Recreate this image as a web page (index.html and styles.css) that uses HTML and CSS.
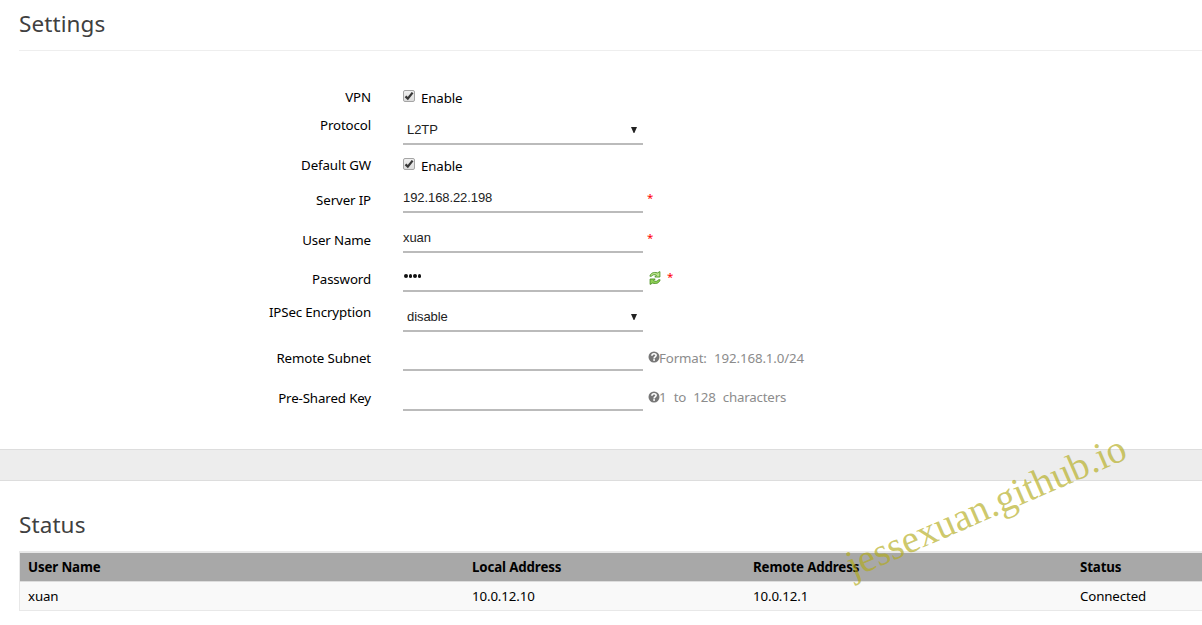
FILE: index.html
```html
<!DOCTYPE html>
<html lang="en">
<head>
<meta charset="utf-8">
<title>VPN Settings</title>
<link rel="stylesheet" href="styles.css">
</head>
<body>
<svg class="defs" width="0" height="0" aria-hidden="true">
  <symbol id="check" viewBox="0 0 10 10">
    <path d="M1.5 5.4 3.8 7.6 8.6 1.6" fill="none" stroke="#383838" stroke-width="2.3"/>
  </symbol>
  <symbol id="help" viewBox="0 0 12 12">
    <circle cx="6" cy="6" r="5.5" fill="#777"/>
    <path d="M3.9 4.7C4 2.1 8.2 2.2 8.1 4.5 8 5.9 6.1 5.8 6.1 7.4" fill="none" stroke="#fff" stroke-width="1.6"/>
    <rect x="5.2" y="8.2" width="1.8" height="1.6" fill="#fff"/>
  </symbol>
</svg>
<section class="settings">
  <h2 class="title">Settings</h2>
  <form class="form">
    <div class="row row-check">
      <label class="label">VPN</label>
      <span class="checkbox"><svg width="10" height="10"><use href="#check"/></svg></span>
      <span class="check-text">Enable</span>
    </div>
    <div class="row row-select">
      <label class="label">Protocol</label>
      <div class="control"><span class="value">L2TP</span><svg class="arrow" width="6" height="6" viewBox="0 0 6 6"><path d="M0 0h6L3.4 6h-.8z"/></svg></div>
    </div>
    <div class="row row-check">
      <label class="label">Default GW</label>
      <span class="checkbox"><svg width="10" height="10"><use href="#check"/></svg></span>
      <span class="check-text">Enable</span>
    </div>
    <div class="row">
      <label class="label">Server IP</label>
      <div class="control"><span class="value">192.168.22.198</span></div>
      <span class="required">*</span>
    </div>
    <div class="row row-tall">
      <label class="label">User Name</label>
      <div class="control"><span class="value">xuan</span></div>
      <span class="required">*</span>
    </div>
    <div class="row row-mid">
      <label class="label">Password</label>
      <div class="control"><span class="dots"><i></i><i></i><i></i><i></i></span></div>
      <svg class="refresh" width="12" height="14" viewBox="0 0 12 14">
        <path d="M.9 5.2C1.6 2.4 4.2.6 8.4 1.9L10.9.6V6H5.8L7.4 4.3C5.4 3.2 3.6 3.6 2.6 5.2z" fill="#b9e68c" stroke="#4b8f22" stroke-width=".9"/>
        <path d="M11.1 8.8C10.4 11.6 7.8 13.4 3.6 12.1L1.1 13.4V8h5.1L4.6 9.7C6.6 10.8 8.4 10.4 9.4 8.8z" fill="#8fd255" stroke="#4b8f22" stroke-width=".9"/>
      </svg>
      <span class="required">*</span>
    </div>
    <div class="row row-tall row-select">
      <label class="label">IPSec Encryption</label>
      <div class="control"><span class="value">disable</span><svg class="arrow" width="6" height="6" viewBox="0 0 6 6"><path d="M0 0h6L3.4 6h-.8z"/></svg></div>
    </div>
    <div class="row row-mid">
      <label class="label">Remote Subnet</label>
      <div class="control"></div>
      <svg class="help-icon" width="12" height="12"><use href="#help"/></svg>
      <span class="help">Format: 192.168.1.0/24</span>
    </div>
    <div class="row row-tall row-key">
      <label class="label">Pre-Shared Key</label>
      <div class="control"></div>
      <svg class="help-icon" width="12" height="12"><use href="#help"/></svg>
      <span class="help">1 to 128 characters</span>
    </div>
  </form>
</section>
<div class="divider"></div>
<section class="status">
  <h2 class="title title-status">Status</h2>
  <div class="table">
    <div class="tr th"><span>User Name</span><span>Local Address</span><span>Remote Address</span><span>Status</span></div>
    <div class="tr td"><span>xuan</span><span>10.0.12.10</span><span>10.0.12.1</span><span>Connected</span></div>
  </div>
</section>
<div class="watermark">jessexuan.github.io</div>
</body>
</html>
```
FILE: styles.css
```css
* { box-sizing: border-box; }
body {
  margin: 0;
  width: 1202px;
  height: 625px;
  overflow: hidden;
  position: relative;
  background: #fff;
  color: #000;
  font: 13.3px/20px "Noto Sans", sans-serif;
  letter-spacing: -.13px;
}
.defs { display: none; }
svg { display: block; flex: none; }
.settings { height: 449px; padding-left: 19px; }
.title {
  margin: 0;
  height: 51px;
  padding-top: 8px;
  border-bottom: 1px solid #eee;
  color: #404040;
  font-size: 22.5px;
  font-weight: 400;
  line-height: 32px;
  letter-spacing: .1px;
}
.form { padding-top: 29px; }
.row { display: flex; align-items: flex-end; height: 34px; }
.row-check:first-child { height: 31px; }
.row-tall { height: 40px; }
.row-mid { height: 39px; }
.label { width: 352px; margin: 0 32px 3px 0; text-align: right; white-space: nowrap; }
.row-select .label { margin-bottom: 10px; }
.row-check .label { margin-bottom: 4px; }
.checkbox {
  width: 12px;
  height: 12px;
  margin-bottom: 9px;
  border: 1px solid #a5a5a5;
  border-radius: 2px;
  background: linear-gradient(#f0f0f0, #dcdcdc);
}
.check-text { margin: 0 0 3px 6px; }
.control {
  display: flex;
  align-items: center;
  justify-content: space-between;
  width: 240px;
  height: 30px;
  border-bottom: 2px solid #bbb;
  color: #222;
  font: 13px/20px "Liberation Sans", Arial, sans-serif;
  letter-spacing: -.08px;
}
.value { padding-top: 2px; }
.row-select .control { padding: 0 6px 0 4px; }
.arrow { margin-top: 1px; fill: #222; }
.dots { display: flex; gap: 1px; padding: 0 0 0 1px; }
.dots i { width: 3.6px; height: 4px; border-radius: 2px; background: #111; }
.required { margin: 0 0 5px 4px; color: #f00; font-size: 11.5px; line-height: 20px; }
.refresh { margin: 0 2px 7px 6px; }
.help-icon { margin: 0 0 8px 5px; }
.help { margin: 0 0 3px -1px; color: #8c8c8c; word-spacing: 4px; white-space: nowrap; }
.row-key .help { margin-bottom: 4px; letter-spacing: -.2px; }
.divider { height: 32px; border: solid #ddd; border-width: 1px 0; background: #ededed; }
.status { padding-left: 19px; }
.title-status { height: 70px; padding-top: 28px; border: 0; }
.table { border: 1px solid #e8e8e8; border-right: 0; border-top-width: 2px; }
.tr { display: grid; grid-template-columns: 444px 281px 327px 1fr; height: 29px; padding-left: 8px; line-height: 28px; }
.th { background: #a8a8a8; border-bottom: 1px solid #ddd; font-weight: 700; }
.td { height: 28px; background: #f9f9f9; }
.watermark {
  position: absolute;
  left: 831px;
  top: 484px;
  width: 310px;
  color: rgba(178, 170, 20, .65);
  font: 39px/44px "Liberation Serif", "Times New Roman", serif;
  letter-spacing: 0;
  text-align: center;
  white-space: nowrap;
  transform: rotate(-23.5deg);
}
```
